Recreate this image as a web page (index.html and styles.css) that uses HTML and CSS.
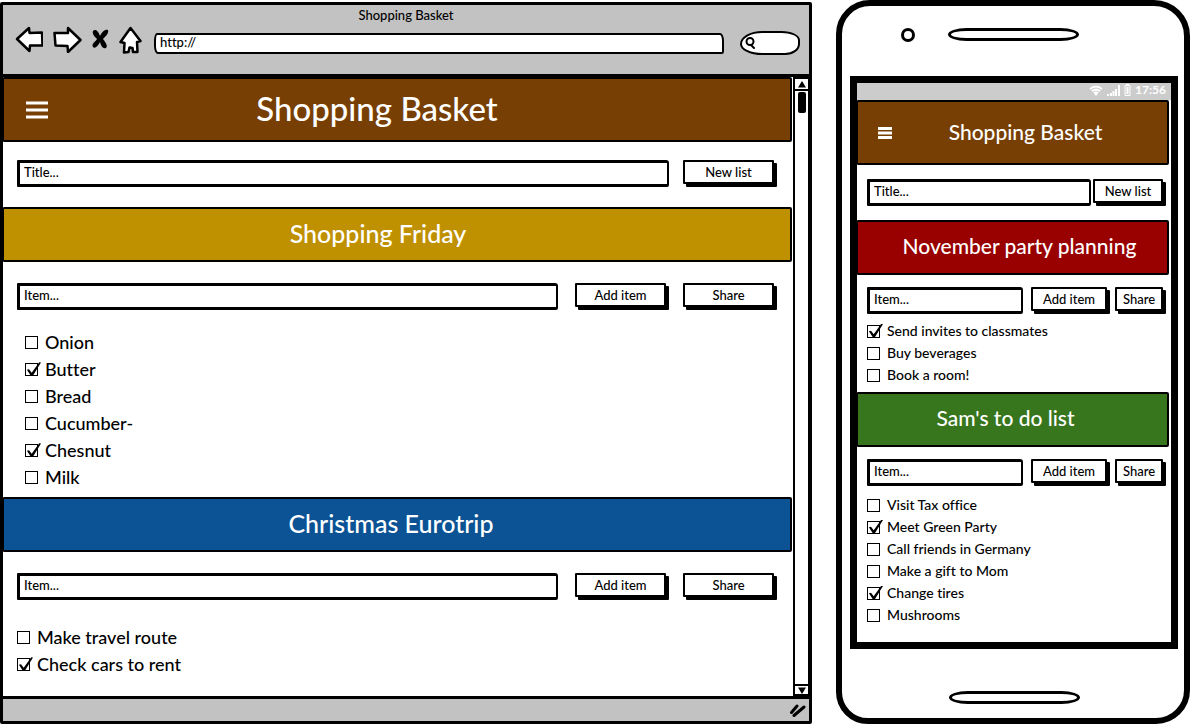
FILE: index.html
```html
<!DOCTYPE html>
<html lang="en">
<head>
<meta charset="utf-8">
<title>Shopping Basket</title>
<link rel="stylesheet" href="styles.css">
</head>
<body>
<div class="browser">
  <header class="chrome">
    <div class="chrome-title">Shopping Basket</div>
    <div class="toolbar">
      <button class="tool" aria-label="Back"><svg width="28" height="27" viewBox="0 0 28 27"><path d="M2 13 14 2 14.500 7 27 6.500 27.500 19.500 15 19.500 14.500 25Z"/></svg></button>
      <button class="tool" aria-label="Forward"><svg width="29" height="27" viewBox="0 0 29 27"><path d="M1.500 7 15 7 15 2 27.500 14 15 26 14.500 20 2.500 19.500Z"/></svg></button>
      <button class="tool" aria-label="Stop"><svg width="17" height="21" viewBox="0 0 17 21"><path class="solid" d="M1 2C3 0 6 1 8 7 10 3 13 0 16 1 17 4 14 7 11 10 14 14 16 17 14 19 11 20 9 17 8 13 6 17 3 20 1 18-1 15 4 12 5 10 2 7 0 5 1 2Z"/></svg></button>
      <button class="tool" aria-label="Home"><svg width="23" height="28" viewBox="0 0 23 28"><path d="M11.500 2 21.500 15 18 16 18.500 26 14 26 13.500 22 10.500 21.500 9.500 26 5 26.500 5.500 17 1.500 16Z"/></svg></button>
      <input class="address" type="text" value="http://" aria-label="Address">
      <label class="search"><svg width="12" height="13" viewBox="0 0 12 13"><circle cx="6" cy="5.500" r="3.500"/><path d="M7 9 10 12"/></svg><input type="search" aria-label="Search"></label>
    </div>
  </header>
  <div class="viewport">
    <main class="page">
      <div class="banner banner-top brown">
        <button class="menu" aria-label="Menu"><svg width="22" height="18" viewBox="0 0 22 18"><path d="M0 2H22M0 9H22M0 16H22"/></svg></button>
        <h1>Shopping Basket</h1>
      </div>
      <form class="row"><input class="field" type="text" placeholder="Title..." aria-label="Title"><button class="btn" type="button">New list</button></form>
      <h2 class="banner gold">Shopping Friday</h2>
      <form class="row row-item"><input class="field" type="text" placeholder="Item..." aria-label="Item"><button class="btn" type="button">Add item</button><button class="btn" type="button">Share</button></form>
      <ul class="items indented">
        <li><label><input type="checkbox">Onion</label></li>
        <li><label><input type="checkbox" checked>Butter</label></li>
        <li><label><input type="checkbox">Bread</label></li>
        <li><label><input type="checkbox">Cucumber-</label></li>
        <li><label><input type="checkbox" checked>Chesnut</label></li>
        <li><label><input type="checkbox">Milk</label></li>
      </ul>
      <h2 class="banner blue">Christmas Eurotrip</h2>
      <form class="row row-item"><input class="field" type="text" placeholder="Item..." aria-label="Item"><button class="btn" type="button">Add item</button><button class="btn" type="button">Share</button></form>
      <ul class="items">
        <li><label><input type="checkbox">Make travel route</label></li>
        <li><label><input type="checkbox" checked>Check cars to rent</label></li>
      </ul>
    </main>
    <div class="scroll">
      <button aria-label="Scroll up"><svg width="8" height="7" viewBox="0 0 8 7"><path d="M4 0 8 6.500H0Z"/></svg></button>
      <div class="thumb"></div>
      <button class="down" aria-label="Scroll down"><svg width="8" height="7" viewBox="0 0 8 7"><path d="M0 0.500H8L4 7Z"/></svg></button>
    </div>
  </div>
  <footer class="status"><svg width="17" height="15" viewBox="0 0 17 15"><path d="M2.500 9.500 8 3M5 12.500 15 4"/></svg></footer>
</div>

<div class="phone">
  <div class="phone-top"><span class="camera"></span><span class="slot"></span></div>
  <div class="screen">
    <div class="phone-status">
      <svg width="14" height="11" viewBox="0 0 14 11"><path class="line" d="M1 4Q7-1 13 4M3 6.300Q7 3 11 6.300M5 8.300Q7 6.800 9 8.300"/><path d="M5 8.500H9L7 11Z"/></svg>
      <svg width="13" height="11" viewBox="0 0 13 11"><path d="M0 9H2V11H0ZM3 8H5V11H3ZM5.500 6H7.500V11H5.500ZM8 4H10V11H8ZM11 0H13V11H11Z"/></svg>
      <svg width="7" height="12" viewBox="0 0 7 12"><path class="case" d="M1 1.500H6V11.500H1Z"/><path d="M2 0H5V1H2ZM2.500 3H4.500V10H2.500Z"/></svg>
      <span>17:56</span>
    </div>
    <div class="banner banner-top brown">
      <button class="menu" aria-label="Menu"><svg width="14" height="12" viewBox="0 0 14 12"><path d="M0 1.500H14M0 6H14M0 10.500H14"/></svg></button>
      <h1>Shopping Basket</h1>
    </div>
    <form class="row"><input class="field" type="text" placeholder="Title..." aria-label="Title"><button class="btn" type="button">New list</button></form>
    <h2 class="banner red">November party planning</h2>
    <form class="row row-item"><input class="field" type="text" placeholder="Item..." aria-label="Item"><button class="btn add" type="button">Add item</button><button class="btn share" type="button">Share</button></form>
    <ul class="items">
      <li><label><input type="checkbox" checked>Send invites to classmates</label></li>
      <li><label><input type="checkbox">Buy beverages</label></li>
      <li><label><input type="checkbox">Book a room!</label></li>
    </ul>
    <h2 class="banner green">Sam's to do list</h2>
    <form class="row row-item"><input class="field" type="text" placeholder="Item..." aria-label="Item"><button class="btn add" type="button">Add item</button><button class="btn share" type="button">Share</button></form>
    <ul class="items last">
      <li><label><input type="checkbox">Visit Tax office</label></li>
      <li><label><input type="checkbox" checked>Meet Green Party</label></li>
      <li><label><input type="checkbox">Call friends in Germany</label></li>
      <li><label><input type="checkbox">Make a gift to Mom</label></li>
      <li><label><input type="checkbox" checked>Change tires</label></li>
      <li><label><input type="checkbox">Mushrooms</label></li>
    </ul>
  </div>
  <div class="phone-bottom"><span class="slot"></span></div>
</div>
</body>
</html>
```

FILE: styles.css
```css
* { box-sizing: border-box; }

body {
  margin: 0;
  min-height: 100vh;
  display: flex;
  gap: 24px;
  padding-right: 1px;
  background: #fff;
  color: #000;
  font: 500 13px/16px Lato, "Open Sans", sans-serif;
  font-variant-ligatures: none;
}

h1, h2, ul, form { margin: 0; }
ul { padding: 0; list-style: none; }
button, input { font: inherit; color: inherit; }
button { padding: 0; border: 0; background: none; }
svg { display: block; }

/* Browser window */
.browser {
  flex: 1;
  min-width: 0;
  display: flex;
  flex-direction: column;
  margin: 2px 0 1px;
  border: 3px solid #000;
  border-radius: 2px;
}
.chrome {
  padding-top: 2px;
  background: #c2c2c2;
  border-bottom: 3px solid #000;
}
.chrome-title { text-align: center; }
.toolbar {
  display: flex;
  align-items: center;
  padding: 0 9px 18px 12px;
  height: 51px;
}
.tool { margin-right: 10px; }
.tool path { fill: #fff; stroke: #000; stroke-width: 2.500; stroke-linejoin: round; }
.tool .solid { fill: #000; stroke: none; }
.address {
  flex: 1;
  min-width: 0;
  height: 21px;
  margin: 8px 16px 0 2px;
  padding: 0 4px 3px;
  border: 2px solid #000;
  border-radius: 3px 4px 2px 4px / 8px 8px 3px 8px;
  background: #fff;
}
.search {
  width: 60px;
  height: 24px;
  margin-top: 6px;
  padding-left: 2px;
  display: flex;
  align-items: center;
  border: 2px solid #000;
  border-radius: 24px 20px 16px 24px / 14px 10px 12px 12px;
  background: #fff;
}
.search svg { flex: none; fill: none; stroke: #000; stroke-width: 2; stroke-linecap: round; }
.search input { width: 36px; border: 0; padding: 0; background: none; }

.viewport { flex: 1; display: flex; gap: 1px; }
.page { flex: 1; min-width: 0; }

/* Scrollbar */
.scroll {
  width: 16px;
  display: flex;
  flex-direction: column;
  align-items: stretch;
  border: 2px solid #000;
  border-width: 2px 1px 0 2px;
}
.scroll button {
  height: 12px;
  display: grid;
  place-items: center;
  border-bottom: 2px solid #000;
}
.scroll .down { margin-top: auto; border-top: 2px solid #000; }
.thumb { width: 8px; height: 21px; margin: 1px auto; background: #000; border-radius: 2px; }

.status {
  height: 25px;
  display: flex;
  justify-content: flex-end;
  align-items: center;
  padding-right: 3px;
  background: #c2c2c2;
  border-top: 3px solid #000;
}
.status path { fill: none; stroke: #000; stroke-width: 3; stroke-linecap: round; }

/* Banners */
.banner {
  height: 55px;
  display: flex;
  align-items: center;
  justify-content: center;
  padding-bottom: 3px;
  border: 2px solid #000;
  border-left-width: 1px;
  border-radius: 1px 2px 2px 1px;
  color: #fff;
  font-weight: 500;
  font-size: 25px;
  line-height: 28px;
}
.banner-top { height: 65px; padding-bottom: 0; }
.banner h1 { flex: 1; text-align: center; font-weight: 500; font-size: 33px; line-height: 36px; }
.menu path { fill: none; stroke: #fff; stroke-width: 3; }
.brown { background: #783f04; }
.gold { background: #bf9000; padding-right: 38px; }
.blue { background: #0b5394; padding-right: 12px; }
.red { background: #990000; }
.green { background: #38761d; padding-right: 14px; }
.page .menu { margin-left: 22px; }
.page h1 { padding: 0 84px 4px 0; }

/* Form rows */
.row { display: flex; gap: 14px; padding: 18px 15px 20px 14px; }
.page .row-item { padding: 21px 15px 19px 14px; }
.page .row-item .field { margin-right: 3px; }
.field {
  flex: 1;
  min-width: 0;
  height: 27px;
  padding: 0 4px 3px;
  border: 3px solid #000;
  border-width: 3px 2px 3px 3px;
  border-radius: 1px 3px 2px 1px;
  background: #fff;
}
.field::placeholder { color: #000; opacity: 1; }
.btn {
  width: 91px;
  height: 24px;
  margin: 0 3px 3px 0;
  border: 2px solid #000;
  border-radius: 1px;
  background: #fff;
  box-shadow: 3px 3px #000;
}

/* Check lists */
.items label { display: flex; align-items: center; gap: 7px; width: max-content; }
.page .items { padding: 5px 0 0 14px; font-size: 18px; line-height: 27px; }
.page .indented { padding: 0 0 6px 22px; }
.items input {
  appearance: none;
  position: relative;
  flex: none;
  width: 13px;
  height: 13px;
  margin: 0;
  border: 1px solid #000;
  background: #fff;
}
.items input:checked::before {
  content: "";
  position: absolute;
  left: 0;
  top: -2px;
  width: 15px;
  height: 14px;
  background: #000;
  clip-path: polygon(6% 55%, 20% 52%, 38% 76%, 88% 2%, 100% 4%, 46% 98%, 32% 98%);
}

/* Phone */
.phone {
  flex: 0 0 354px;
  min-width: 0;
  display: flex;
  flex-direction: column;
  margin-bottom: 1px;
  padding: 0 6px 0 8px;
  border: 6px solid #000;
  border-radius: 34px 36px 34px 32px;
}
.phone-top { height: 70px; display: flex; gap: 33px; padding: 22px 0 0 51px; }
.camera { width: 14px; height: 14px; border: 3px solid #000; border-radius: 50%; }
.slot { width: 131px; height: 13px; border: 3px solid #000; border-radius: 20px / 7px; }
.phone-bottom { height: 69px; display: flex; justify-content: center; padding-top: 42px; }
.screen { flex: 1; border: 7px solid #000; }
.phone-status {
  height: 17px;
  display: flex;
  justify-content: flex-end;
  align-items: center;
  gap: 4px;
  padding: 0 5px 3px 0;
  background: #ccc;
  color: #fff;
  font-weight: 700;
  font-size: 12px;
}
.phone-status path { fill: #fff; }
.phone-status .line { fill: none; stroke: #fff; stroke-width: 2; }
.phone-status .case { fill: none; stroke: #fff; stroke-width: 1; }
.phone .banner { margin-right: 2px; font-size: 21px; line-height: 24px; }
.phone .menu { margin-left: 20px; }
.phone .menu path { stroke-width: 3; }
.phone h1 { padding: 0 8px 2px 0; font-size: 21px; line-height: 24px; }
.phone .red { padding-left: 14px; }
.phone .row { gap: 2px; padding: 14px 5px 14px 10px; }
.phone .row .btn { width: 70px; }
.phone .row-item { gap: 5px; padding: 12px 5px 6px 10px; }
.phone .row-item .field { margin-right: 3px; }
.phone .row .add { width: 76px; }
.phone .row .share { width: 48px; }
.phone .items { padding: 0 0 6px 10px; font-size: 14px; line-height: 22px; }
.phone .last { padding-top: 2px; }
```
